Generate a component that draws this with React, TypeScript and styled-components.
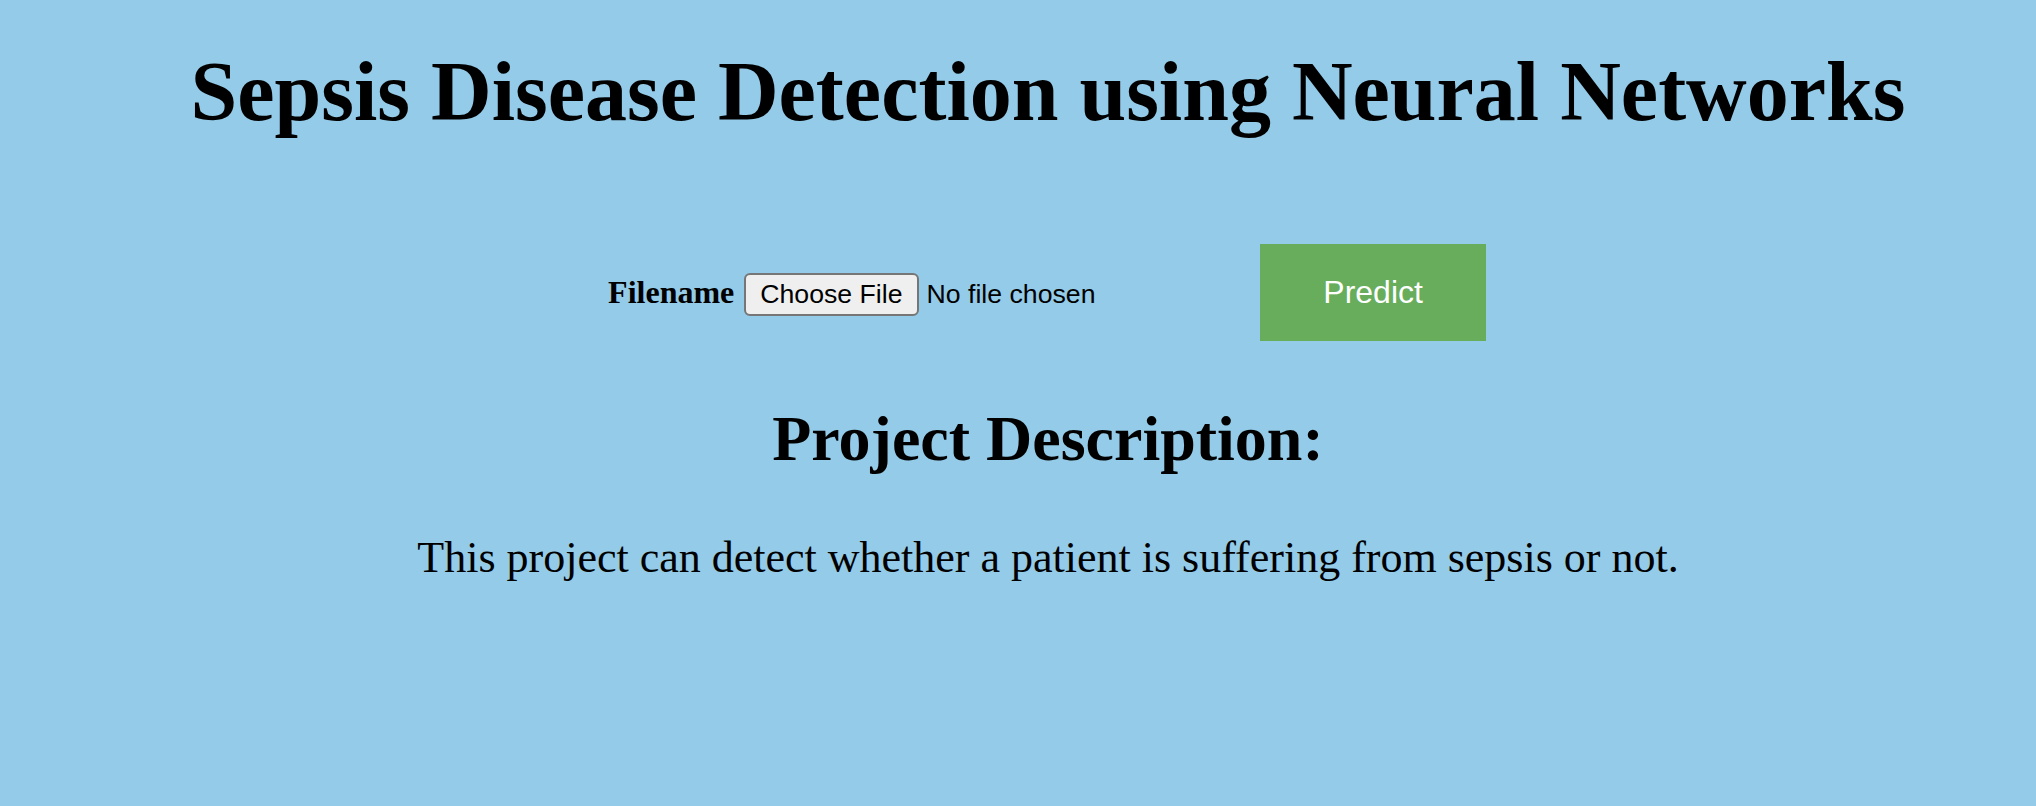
import React from "react";
import styled, { createGlobalStyle } from "styled-components";

const GlobalStyle = createGlobalStyle`
  html,
  body {
    margin: 0;
    padding: 0;
    min-height: 100%;
    background: #93cbe8;
  }
`;

const App = () => {
  return (
    <>
      <GlobalStyle />
      <Page>
        <Title>Sepsis Disease Detection using Neural Networks</Title>
        <UploadForm onSubmit={(e) => e.preventDefault()}>
          <FieldLabel htmlFor="file">Filename</FieldLabel>
          <FileInput id="file" type="file" name="file" />
          <PredictButton type="submit">Predict</PredictButton>
        </UploadForm>
        <SubTitle>Project Description:</SubTitle>
        <Description>
          This project can detect whether a patient is suffering from sepsis or
          not.
        </Description>
      </Page>
    </>
  );
};

export default App;

const Page = styled.div`
  min-height: 806px;
  box-sizing: border-box;
  display: flex;
  flex-direction: column;
  align-items: center;
  padding: 42px 0 0 60px;
  color: #000;
  font-family: "Liberation Serif", "Times New Roman", serif;
`;

const Title = styled.h1`
  margin: 0;
  font-size: 84px;
  line-height: 100px;
  font-weight: 700;
  white-space: nowrap;
`;

const UploadForm = styled.form`
  display: flex;
  align-items: baseline;
  margin-top: 102px;
  margin-right: 2px;
`;

const FieldLabel = styled.label`
  font-size: 32px;
  font-weight: 700;
  margin-right: 10px;
`;

const FileInput = styled.input`
  width: 508px;
  font-family: "Liberation Sans", Arial, sans-serif;
  font-size: 26.67px;
  color: #000;

  &::file-selector-button {
    font-family: "Liberation Sans", Arial, sans-serif;
    font-size: 26.67px;
    color: #000;
    background: #efefef;
    border: 2px solid #767676;
    border-radius: 6px;
    padding: 4px 14px;
    margin-right: 8px;
  }
`;

const PredictButton = styled.button`
  margin-left: 8px;
  padding: 30px 63px;
  border: none;
  background: #68ad5c;
  color: #fff;
  font-family: "Liberation Sans", Arial, sans-serif;
  font-size: 32px;
  line-height: 37px;
  cursor: pointer;
`;

const SubTitle = styled.h2`
  margin: 61px 0 0;
  font-size: 64px;
  line-height: 74px;
  font-weight: 700;
`;

const Description = styled.p`
  margin: 57px 0 0;
  font-size: 44px;
  line-height: 50px;
`;
